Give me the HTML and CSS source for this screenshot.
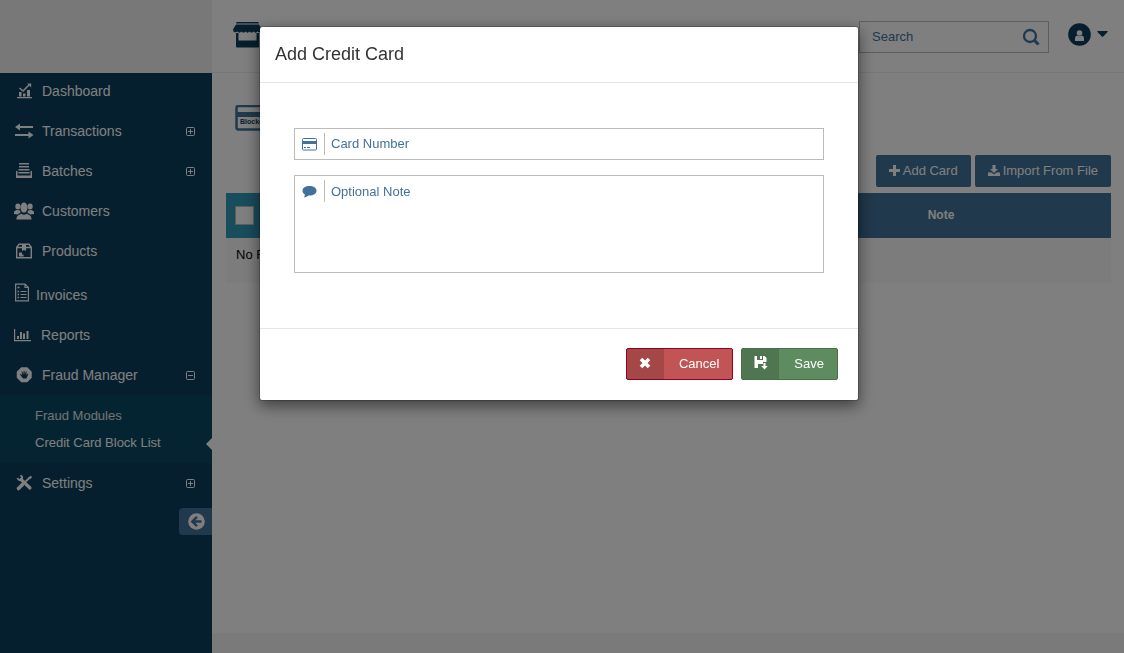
FILE: index.html
```
<!DOCTYPE html>
<html lang="en">
<head>
  <meta charset="UTF-8">
  <meta name="viewport" content="width=device-width, initial-scale=1.0">
  <title>Credit Card Block List</title>
  <link rel="stylesheet" href="styles.css">
</head>
<body>
  <div class="page">
    <aside class="sidebar">
      <div class="brand"></div>
      <ul class="menu">
        <li>
          <a href="#" class="menu-item">
            <svg class="menu-icon" width="20" height="18" viewBox="0 0 20 18" fill="currentColor"><path d="M3 15h15v1.300H3zM5 10h2.500v4.500H5zM9 11.500h2.500v3H9zM13 8h3v6.500h-3z"/><path d="M5.500 6l3.500 3 6-6" fill="none" stroke="currentColor" stroke-width="1.500"/><path d="M13.200 1.500h4v4z"/></svg>
            <span>Dashboard</span>
          </a>
        </li>
        <li>
          <a href="#" class="menu-item">
            <svg class="menu-icon" width="20" height="18" viewBox="0 0 20 18" fill="currentColor"><path d="M1 5l5-3.500V4h13v2H6v2.500zM19.500 13l-5-3.500V12H1v2h13.500v2.500z"/></svg>
            <span>Transactions</span>
            <svg class="menu-toggle" width="9" height="9" viewBox="0 0 9 9" fill="none" stroke="currentColor"><rect x=".5" y=".5" width="8" height="8" rx="1"/><path d="M2 4.500h5M4.500 2v5"/></svg>
          </a>
        </li>
        <li>
          <a href="#" class="menu-item">
            <svg class="menu-icon" width="20" height="18" viewBox="0 0 20 18" fill="currentColor"><path d="M5 1h10v1.500H5zM5 4h10v1.500H5zM4.500 7h11v1.500h-11zM4.500 10h11v1.500h-11zM2 9h1.500v4.500h13V9H18v7H2z"/></svg>
            <span>Batches</span>
            <svg class="menu-toggle" width="9" height="9" viewBox="0 0 9 9" fill="none" stroke="currentColor"><rect x=".5" y=".5" width="8" height="8" rx="1"/><path d="M2 4.500h5M4.500 2v5"/></svg>
          </a>
        </li>
        <li>
          <a href="#" class="menu-item">
            <svg class="menu-icon" width="22" height="18" viewBox="1 0.500 20 16" preserveAspectRatio="none" fill="currentColor"><ellipse cx="11" cy="5.500" rx="3.500" ry="4.500"/><circle cx="4.900" cy="4.500" r="2.600"/><circle cx="17.100" cy="4.500" r="2.600"/><path d="M3.500 16c0-3 1.500-4 5-5l2.500 1 2.500-1c3.500 1 5 2 5 5zM.5 11c0-2 1-3 3.500-3.500l3 .5.500 2-3 1.500zM21.500 11c0-2-1-3-3.500-3.500l-3 .5-.5 2 3 1.500z"/></svg>
            <span>Customers</span>
          </a>
        </li>
        <li>
          <a href="#" class="menu-item">
            <svg class="menu-icon" width="20" height="18" viewBox="0 0 20 18" fill="none" stroke="currentColor" stroke-width="1.400"><path d="M2.700 5.500h14.600v10.300H2.700zM2.700 5.500l2.300-3.300h10l2.300 3.300"/><path d="M8 2.200h4V9l-2-1-2 1z" fill="currentColor" stroke="none"/><path d="M5 11.500h3M5 13.500h4.500" stroke-width="1.800"/></svg>
            <span>Products</span>
          </a>
        </li>
        <li>
          <a href="#" class="menu-item menu-item-invoices">
            <svg class="menu-icon" width="16" height="20" viewBox="0 0 16 20" fill="none" stroke="currentColor" stroke-width="1.200"><path d="M1.600 1.100h9.400l3.400 3.400v13.400H1.600zM11 1.100v3.400h3.400"/><path d="M6.500 8.500h6M6.500 11.500h6M6.500 14.500h6" stroke-width="1"/><path d="M3.500 4.500h2M3.500 8.500h1.500M3.500 11.500h1.500M3.500 14.500h1.500" stroke-width="1.600"/></svg>
            <span>Invoices</span>
          </a>
        </li>
        <li>
          <a href="#" class="menu-item menu-item-reports">
            <svg class="menu-icon" width="19" height="18" viewBox="0 0 19 18" fill="currentColor"><path d="M0 3h1.200v11H17v1.200H0zM3 10h2v3H3zM6 6h2v7H6zM9 7.500h2v5.500H9zM12.500 5h2v8h-2z"/></svg>
            <span>Reports</span>
          </a>
        </li>
        <li>
          <a href="#" class="menu-item">
            <svg class="menu-icon" width="20" height="18" viewBox="0 0 20 18"><path d="M7.500 2h5.500l4 4v5.500L13 15.500H7.500l-4-4V6z" fill="currentColor" stroke="currentColor" stroke-width="1.500" stroke-linejoin="round"/><path d="M9 12.500L6 8.500l.8-.5 1.500 1-.8-3.500h.8l1 3 .4-3.700h.8l.3 3.700 1-3h.8l-.3 3.500 1.500-1.500.6.500-2 4.500z" fill="#0b3e5c"/></svg>
            <span>Fraud Manager</span>
            <svg class="menu-toggle" width="9" height="9" viewBox="0 0 9 9" fill="none" stroke="currentColor"><rect x=".5" y=".5" width="8" height="8" rx="1"/><path d="M2 4.500h5"/></svg>
          </a>
          <ul class="submenu">
            <li><a href="#">Fraud Modules</a></li>
            <li class="active"><a href="#">Credit Card Block List</a></li>
          </ul>
        </li>
        <li>
          <a href="#" class="menu-item">
            <svg class="menu-icon" width="20" height="18" viewBox="0 0 20 18" fill="none" stroke="currentColor"><path d="M11 8l5-4.500" stroke-width="1.800"/><path d="M7 5.500l9 8.500" stroke-width="3.200" stroke-linecap="round"/><path d="M4.500 14.500L8.500 10.500" stroke-width="3.600" stroke-linecap="round"/><path d="M3.500 4c1 2.500 3 2.500 4 1.300s1-3-1-4" stroke-width="2"/><path d="M15 4.500L17.500 2.500" stroke-width="2.200"/></svg>
            <span>Settings</span>
            <svg class="menu-toggle" width="9" height="9" viewBox="0 0 9 9" fill="none" stroke="currentColor"><rect x=".5" y=".5" width="8" height="8" rx="1"/><path d="M2 4.500h5M4.500 2v5"/></svg>
          </a>
        </li>
      </ul>
      <button type="button" class="collapse" aria-label="Collapse menu">
        <svg width="17" height="17" viewBox="0 0 17 17"><circle cx="8.500" cy="8.500" r="8.300" fill="#fff"/><path d="M13.500 8.500H5M9 3.800L4.300 8.500 9 13.200" fill="none" stroke="#42729a" stroke-width="2.400"/></svg>
      </button>
    </aside>

    <div class="content">
      <header class="topbar">
        <svg class="store" width="30" height="27" viewBox="0 0 30 27" fill="#0b3e5c"><path d="M5 1h21q1 0 1 1.500H4Q4 1 5 1zM4 3.500h23l3 5c0 3-3 3.500-4.500 2-1 1.500-3 1.500-4 0-1 1.500-3 1.500-4 0-1 1.500-3 1.500-4 0-1 1.500-3 1.500-4 0-1 1.500-3 1.500-4 0C4 12 1 11.500 1 8.500z"/><path d="M4 12h2.500v7.500h18V12H27v13.500q0 1-1 1H5q-1 0-1-1z"/></svg>
        <div class="topbar-right">
          <form class="search">
            <input type="text" placeholder="Search" aria-label="Search">
            <button type="submit" aria-label="Search">
              <svg width="18" height="18" viewBox="0 0 18 18" fill="none" stroke="#42729a"><circle cx="8" cy="8" r="6" stroke-width="2.300"/><path d="M12 12l4.500 4.500" stroke-width="3"/></svg>
            </button>
          </form>
          <button type="button" class="user" aria-label="Account">
            <svg width="23" height="23" viewBox="0 0 23 23"><circle cx="11.500" cy="11.500" r="11.300" fill="#0b3e5c"/><circle cx="11.500" cy="10" r="2.800" fill="#fff"/><path d="M7 17.500v-2c0-2 1.200-3 2.500-3q2 1.500 4 0c1.300 0 2.500 1 2.500 3v2q0 .5-.5.500h-8q-.5 0-.5-.5z" fill="#fff"/></svg>
            <svg width="11" height="6" viewBox="0 0 11 6" fill="#0b3e5c"><path d="M.5 0h10q.5.500 0 1L6 5.700q-.5.300-1 0L.5 1Q0 .5.500 0z"/></svg>
          </button>
        </div>
      </header>

      <main class="main">
        <svg class="page-icon" width="36" height="26" viewBox="0 0 36 26"><rect x="1.500" y="1" width="33" height="23.500" rx="2" fill="#fff" stroke="#42729a" stroke-width="2.500"/><path d="M1 7h34v5H1z" fill="#42729a"/><text x="5" y="19" class="page-icon-text">Blocked</text></svg>
        <div class="actions">
          <button type="button" class="btn">
            <svg width="11" height="11" viewBox="0 0 11 11" fill="#fff"><path d="M4 0h3v4h4v3H7v4H4V7H0V4h4z"/></svg>
            Add Card
          </button>
          <button type="button" class="btn">
            <svg width="12" height="12" viewBox="0 0 12 12" fill="#fff"><path d="M4.500 0h3v4H10L6 8 2 4h2.500z"/><path d="M0 7.500h3.500L6 9.500l2.500-2H12V11H0z"/></svg>
            Import From File
          </button>
        </div>
        <table class="cards">
          <thead>
            <tr>
              <th class="col-check"><input type="checkbox" aria-label="Select all"></th>
              <th>Card Number</th>
              <th class="col-note">Note</th>
            </tr>
          </thead>
          <tbody>
            <tr><td colspan="3">No Records Found</td></tr>
          </tbody>
        </table>
      </main>
      <footer class="footer"></footer>
    </div>
  </div>

  <div class="backdrop">
    <div class="modal" role="dialog" aria-labelledby="modal-title">
      <div class="modal-header">
        <h4 id="modal-title">Add Credit Card</h4>
      </div>
      <form class="modal-body">
        <div class="field">
          <label for="card-number">
            <svg width="15" height="13" viewBox="0 0 15 13"><rect x=".5" y=".5" width="14" height="11.500" rx="1" fill="#fff" stroke="#42729a"/><path d="M0 3h15v3H0zM2 9h2v1H2zM5 9h3v1H5z" fill="#42729a"/></svg>
          </label>
          <input type="text" id="card-number" placeholder="Card Number">
        </div>
        <div class="field field-note">
          <label for="note">
            <svg width="15" height="13" viewBox="0 0 15 13" fill="#42729a"><path d="M7.500 1C11.500 1 14.500 3 14.500 5.700s-3 4.800-7 4.800h-1C5 11.800 3.500 12.500 1.500 12.500c1-.8 1.500-1.500 1.300-3C1.300 8.500.5 7.300.5 5.700.5 3 3.500 1 7.500 1z"/></svg>
          </label>
          <textarea id="note" placeholder="Optional Note"></textarea>
        </div>
      </form>
      <div class="modal-footer">
        <button type="button" class="action cancel">
          <span class="action-icon"><svg width="12" height="14" viewBox="0 0 12 14"><path d="M2 2l8 8M10 2l-8 8" stroke="#fff" stroke-width="3.600"/></svg></span>
          <span class="action-text">Cancel</span>
        </button>
        <button type="button" class="action save">
          <span class="action-icon"><svg width="14" height="16" viewBox="0 0 14 16" fill="#fff"><path d="M1 0h2v4h6V0h1.500l2 2v4H9v2H4v4H1q-.5 0-.5-.5V.5Q.5 0 1 0z"/><path d="M6 0h2v3H6zM9.500 7h2v3h2.300L10.500 13.500 7.200 10h2.300z"/></svg></span>
          <span class="action-text">Save</span>
        </button>
      </div>
    </div>
  </div>
</body>
</html>
```
FILE: styles.css
```
* {
  box-sizing: border-box;
}
body {
  margin: 0;
  background: #fff;
  color: #000;
  font-family: "Liberation Sans", Arial, sans-serif;
  font-size: 13px;
}
button,
input,
textarea {
  font: inherit;
}
button {
  cursor: pointer;
}
svg {
  display: block;
  flex: none;
}
a {
  color: #fff;
  text-decoration: none;
}
ul {
  margin: 0;
  padding: 0;
  list-style: none;
}
.page {
  display: flex;
  min-height: 100vh;
}

/* sidebar */
.sidebar {
  display: flex;
  flex-direction: column;
  flex: none;
  width: 212px;
  background: #0b3e5c;
}
.brand {
  height: 73px;
  background: #f0f0f0;
}
.menu {
  margin-top: -2px;
}
.menu-item {
  display: flex;
  align-items: center;
  gap: 8px;
  height: 40px;
  padding: 0 17px 0 14px;
  font-size: 14px;
}
.menu-icon {
  width: 20px;
}
.menu-toggle {
  margin-left: auto;
}
.menu-item-invoices {
  gap: 6px;
  height: 44px;
}
.menu-item-invoices .menu-icon {
  width: 16px;
}
.menu-item-invoices span {
  padding-top: 4px;
}
.menu-item-reports .menu-icon {
  width: 19px;
}
.submenu {
  padding: 7px 0;
  background: #0a4863;
}
.submenu li {
  position: relative;
  padding-left: 35px;
  line-height: 27px;
}
.submenu a {
  display: block;
  color: #e5e5e5;
}
.submenu .active a {
  color: #fff;
}
.submenu .active::after {
  content: "";
  position: absolute;
  top: 9px;
  right: 0;
  border: 6px solid transparent;
  border-left: 0;
  border-right-color: #fff;
}
.collapse {
  display: flex;
  align-items: center;
  align-self: flex-end;
  width: 33px;
  height: 27px;
  margin-top: 5px;
  padding: 0 9px;
  border: 0;
  border-radius: 4px 0 0 4px;
  background: #42729a;
}

/* top bar */
.content {
  display: flex;
  flex: 1;
  flex-direction: column;
}
.topbar {
  display: flex;
  justify-content: space-between;
  height: 73px;
  padding: 21px 16px 0 20px;
  border-bottom: 1px solid #eee;
}
.topbar-right {
  display: flex;
  gap: 19px;
}
.search {
  display: flex;
  width: 190px;
  height: 32px;
  border: 1px solid #bbb;
}
.search input {
  flex: 1;
  min-width: 0;
  padding: 0 12px 2px;
  border: 0;
  background: none;
}
.search button {
  padding: 0 8px;
  border: 0;
  background: none;
}
::placeholder {
  color: #42729a;
  opacity: 1;
}
.user {
  display: flex;
  align-items: center;
  gap: 6px;
  height: 26px;
  padding: 0;
  border: 0;
  background: none;
}

/* block list */
.main {
  flex: 1;
  padding: 32px 13px 0 14px;
}
.page-icon {
  margin-left: 9px;
}
.page-icon-text {
  font-size: 7px;
  font-weight: bold;
  fill: #0b3e5c;
}
.actions {
  display: flex;
  justify-content: flex-end;
  gap: 4px;
  margin: 24px 0 6px;
}
.btn {
  display: flex;
  align-items: center;
  gap: 3px;
  height: 32px;
  padding: 0 13px 1px;
  border: 0;
  border-radius: 2px;
  background: #42729a;
  color: #fff;
}
.cards {
  width: 100%;
  border-collapse: collapse;
}
.cards th {
  height: 45px;
  padding: 0 0 2px;
  background: #42729a;
  color: #fff;
  font-size: 12px;
}
.cards .col-check {
  width: 45px;
  padding-left: 9px;
  background: #309ab8;
  text-align: left;
}
.col-check input {
  display: block;
  appearance: none;
  width: 19px;
  height: 19px;
  margin: 2px 0 0;
  border: 1px solid #bbb;
  background: #fff;
}
.cards .col-note {
  width: 340px;
}
.cards td {
  height: 45px;
  padding: 9px 10px;
  background: #f9f9f9;
  vertical-align: top;
}
.footer {
  height: 20px;
  background: #f5f5f5;
}

/* modal */
.backdrop {
  position: fixed;
  inset: 0;
  padding: 26px 6px 0 0;
  background: rgba(0, 0, 0, 0.5);
}
.modal {
  max-width: 600px;
  margin: 0 auto;
  border: 1px solid rgba(0, 0, 0, 0.2);
  border-radius: 3px;
  background: #fff;
  background-clip: padding-box;
  box-shadow: 0 5px 15px rgba(0, 0, 0, 0.5);
}
.modal-header {
  padding: 15px;
  border-bottom: 1px solid #e5e5e5;
}
.modal-header h4 {
  margin: 0;
  color: #333;
  font-size: 18px;
  font-weight: normal;
  line-height: 25px;
}
.modal-body {
  display: flex;
  flex-direction: column;
  gap: 15px;
  padding: 45px 34px 55px;
}
.field {
  display: flex;
  height: 32px;
  border: 1px solid #bbb;
}
.field-note {
  height: 98px;
}
.field label {
  display: flex;
  align-items: center;
  width: 30px;
  height: 22px;
  margin-top: 4px;
  padding-left: 7px;
  border-right: 1px solid #bbb;
}
.field input,
.field textarea {
  flex: 1;
  height: 30px;
  padding: 0 6px 2px;
  border: 0;
  outline: 0;
  background: none;
  resize: none;
}
.field textarea {
  height: 96px;
  padding-top: 8px;
}
.modal-footer {
  display: flex;
  justify-content: flex-end;
  gap: 8px;
  padding: 19px 20px 20px;
  border-top: 1px solid #e5e5e5;
}
.action {
  display: flex;
  height: 32px;
  padding: 0;
  border: 1px solid;
  border-radius: 2px;
  color: #fff;
}
.action-icon {
  display: flex;
  align-items: center;
  justify-content: center;
  width: 37px;
  height: 30px;
  background: rgba(0, 0, 0, 0.15);
}
.action-text {
  padding: 0 13px 0 15px;
  line-height: 30px;
}
.cancel {
  border-color: #910022;
  background: #c15454;
}
.save {
  border-color: #4a704b;
  background: #5f8b60;
}
```
